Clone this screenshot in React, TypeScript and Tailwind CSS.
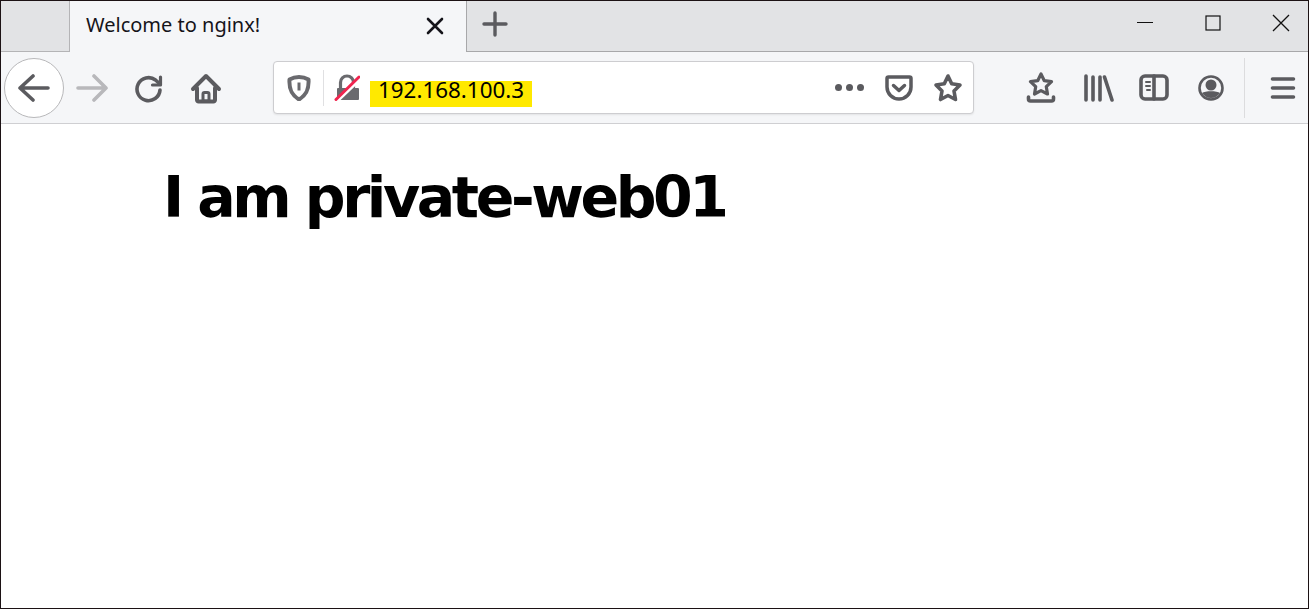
const ui = { fontFamily: '"Noto Sans", "Open Sans", sans-serif' }

function Icon({ children, className = 'w-8 h-8' }: { children: React.ReactNode; className?: string }) {
  return (
    <svg viewBox="0 0 32 32" fill="none" stroke="#5b5b5f" strokeWidth="3.6" strokeLinecap="round" strokeLinejoin="round" className={className}>
      {children}
    </svg>
  )
}

function ToolButton({ width, children }: { width: string; children: React.ReactNode }) {
  return <div className={`flex items-center justify-center shrink-0 ${width}`}>{children}</div>
}

export default function App() {
  return (
    <div className="h-[609px] w-[1309px] border border-[#1c1214] bg-white overflow-hidden flex flex-col" style={ui}>
      {/* Tab strip */}
      <div className="h-[51px] flex bg-[#e2e3e5] shrink-0">
        <div className="w-[69px] border-r border-b border-[#b4b4b6] shrink-0" />
        <div className="w-[396px] bg-[#f5f6f8] flex items-center pl-[16px] pr-[21px] shrink-0">
          <span className="text-[20px] leading-none text-[#15141a] flex-1 pb-[4px]">Welcome to nginx!</span>
          <svg viewBox="0 0 20 20" className="w-5 h-5 mb-[2px]" stroke="#15141a" strokeWidth="2.6" strokeLinecap="round">
            <path d="M3 3l14 14M17 3L3 17" />
          </svg>
        </div>
        <div className="flex-1 border-l border-b border-[#a8a8aa] flex">
          <div className="w-[56px] flex items-center justify-center pb-[4px]">
            <svg viewBox="0 0 26 26" className="w-[26px] h-[26px]" stroke="#5b5b5f" strokeWidth="3.4" strokeLinecap="round">
              <path d="M13 2v22M2 13h22" />
            </svg>
          </div>
          <div className="flex-1" />
          {/* Window controls */}
          <div className="flex items-center pb-[6px]">
            <div className="w-[68px] flex justify-center">
              <svg viewBox="0 0 16 16" className="w-4 h-4" stroke="#111" strokeWidth="1"><path d="M0 7.5h16" /></svg>
            </div>
            <div className="w-[68px] flex justify-center">
              <svg viewBox="0 0 16 16" className="w-4 h-4" stroke="#111" strokeWidth="1.2" fill="none"><rect x="1" y="1" width="14" height="14" /></svg>
            </div>
            <div className="w-[54px] ml-[7px] flex justify-center">
              <svg viewBox="0 0 18 18" className="w-[18px] h-[18px]" stroke="#111" strokeWidth="1.3"><path d="M1 1l16 16M17 1L1 17" /></svg>
            </div>
          </div>
        </div>
      </div>

      {/* Toolbar */}
      <div className="h-[72px] bg-[#f5f6f8] border-b border-[#cfcfd2] flex items-center shrink-0">
        <div className="w-[3px] shrink-0" />
        <div className="w-[60px] h-[60px] rounded-full bg-white border border-[#b8b8ba] flex items-center justify-center shrink-0">
          <Icon>
            <path d="M2 16h28M15 4L2 16l13 12" />
          </Icon>
        </div>
        <ToolButton width="w-[56px]">
          <Icon>
            <path d="M2 16h28M18 4l12 12-12 12" stroke="#b8b8bb" />
          </Icon>
        </ToolButton>
        <ToolButton width="w-[58px]">
          <Icon>
            <path d="M27 18a11.500 11.500 0 1 1-4.500-10L27 12" strokeWidth="3.600" />
            <path d="M27.500 5v8h-8" strokeWidth="3.200" />
          </Icon>
        </ToolButton>
        <ToolButton width="w-[56px]">
          <Icon>
            <path d="M3 17L16 4l13 13" strokeWidth="4" />
            <path d="M7 16v12a1.500 1.500 0 0 0 1.500 1.500h15A1.500 1.500 0 0 0 25 28V16" strokeWidth="4" />
            <path d="M13 29v-7a1.500 1.500 0 0 1 1.500-1.500h3A1.500 1.500 0 0 1 19 22v7z" strokeWidth="3" />
            <path d="M16 24.500v1.500" stroke="#f5f6f8" strokeWidth="2" strokeLinecap="butt" />
          </Icon>
        </ToolButton>
        <div className="w-[39px] shrink-0" />

        {/* URL bar */}
        <div className="w-[701px] h-[53px] bg-white border border-[#cdcdd0] rounded-[4px] shadow-[0_1px_2px_rgba(0,0,0,0.08)] flex items-center shrink-0">
          <div className="w-[50px] h-[36px] border-r border-[#e0e0e2] flex items-center justify-center shrink-0">
            <svg viewBox="0 0 24 26" className="w-[24px] h-[26px]" fill="none" stroke="#6a6a6e" strokeWidth="4" strokeLinejoin="round">
              <path d="M2.500 4.500C6 2.500 9 2 12 2s6 .5 9.500 2.500c.6 9-1.500 15-9.500 20-8-5-10.100-11-9.500-20z" />
              <path d="M12 7.500v8" strokeWidth="3" />
            </svg>
          </div>
          <div className="w-[46px] flex items-center justify-center shrink-0">
            <svg viewBox="0 0 26 28" className="w-[26px] h-[28px]">
              <path d="M6.500 14V8.500a6.500 6.500 0 0 1 13 0V14" fill="none" stroke="#6a6a6e" strokeWidth="3.200" />
              <path d="M3 15a1 1 0 0 1 1-1h20a1 1 0 0 1 1 1v10a1 1 0 0 1-1 1H4a1 1 0 0 1-1-1z" fill="#6a6a6e" />
              <path d="M3 27L26 5" stroke="#fff" strokeWidth="3.500" />
              <path d="M2 25.500L25 3" stroke="#f0254f" strokeWidth="3" strokeLinecap="round" />
            </svg>
          </div>
          <div className="h-[26px] w-[162px] mt-[12px] pl-[8px] bg-[#ffe900] text-[22.400px] leading-[18px] text-black shrink-0">
            192.168.100.3
          </div>
          <div className="flex-1" />
          <div className="flex items-center gap-[4px] w-[30px] mr-[20px]">
            <span className="w-[7px] h-[7px] rounded-full bg-[#5b5b5f]" />
            <span className="w-[7px] h-[7px] rounded-full bg-[#5b5b5f]" />
            <span className="w-[7px] h-[7px] rounded-full bg-[#5b5b5f]" />
          </div>
          <div className="w-[28px] mr-[20px] flex justify-center">
            <svg viewBox="0 0 28 26" className="w-[28px] h-[26px]" fill="none" stroke="#5b5b5f" strokeWidth="3.500" strokeLinecap="round" strokeLinejoin="round">
              <path d="M2 3.500A1.500 1.500 0 0 1 3.500 2h21A1.500 1.500 0 0 1 26 3.500V12a12 12 0 0 1-24 0z" />
              <path d="M8.500 10.500L14 15.500l5.500-5" />
            </svg>
          </div>
          <div className="w-[30px] mr-[10px] flex justify-center">
            <svg viewBox="0 0 30 30" className="w-[30px] h-[30px]" fill="none" stroke="#5b5b5f" strokeWidth="3.600" strokeLinejoin="round">
              <path d="M15 3l3.700 7.800 8.300 1.200-6 6 1.500 8.500-7.500-4-7.500 4L9 18l-6-6 8.300-1.200z" />
            </svg>
          </div>
        </div>

        <div className="w-[38px] shrink-0" />
        <ToolButton width="w-[57px]">
          <Icon>
            <path d="M16 2l3.300 6.700 7.200 1-5.200 5 1.200 7.300-6.500-3.400L9.500 22l1.200-7.300-5.200-5 7.200-1z" strokeWidth="3.200" />
            <path d="M3.500 25v2a2 2 0 0 0 2 2h21a2 2 0 0 0 2-2v-2" />
          </Icon>
        </ToolButton>
        <ToolButton width="w-[57px]">
          <Icon>
            <path d="M4 4v24M11 5v23M18 5v23M22.500 5L30 28" />
          </Icon>
        </ToolButton>
        <ToolButton width="w-[56px]">
          <Icon>
            <rect x="3" y="4" width="26" height="23" rx="4" />
            <path d="M16 4v23" />
            <path d="M8 10h4M8 14h4M9 18h3" strokeWidth="2" />
          </Icon>
        </ToolButton>
        <ToolButton width="w-[57px]">
          <Icon>
            <circle cx="16" cy="16" r="11.500" strokeWidth="2.600" />
            <circle cx="16" cy="13" r="5.500" fill="#5b5b5f" stroke="none" />
            <path d="M7 21c3-2.500 15-2.500 18 0-2 3-5.500 5-9 5s-7-2-9-5z" fill="#5b5b5f" stroke="none" />
          </Icon>
        </ToolButton>
        <div className="w-[5px] shrink-0" />
        <div className="h-[60px] border-l border-[#dcdcde] w-[1px] shrink-0" />
        <div className="flex-1 flex justify-center pl-[12px]">
          <Icon className="w-[26px] h-[26px]">
            <path d="M3 5h26M3 16h26M3 27h26" strokeWidth="4.200" />
          </Icon>
        </div>
      </div>

      {/* Page content */}
      <div className="flex-1 bg-white pl-[162px] pt-[39px]">
        <h1 className="text-[57px] leading-[68px] font-bold text-black tracking-[-3.4px]" style={{ fontFamily: '"DejaVu Sans", Verdana, sans-serif' }}>
          I am private-web01
        </h1>
      </div>
    </div>
  )
}
